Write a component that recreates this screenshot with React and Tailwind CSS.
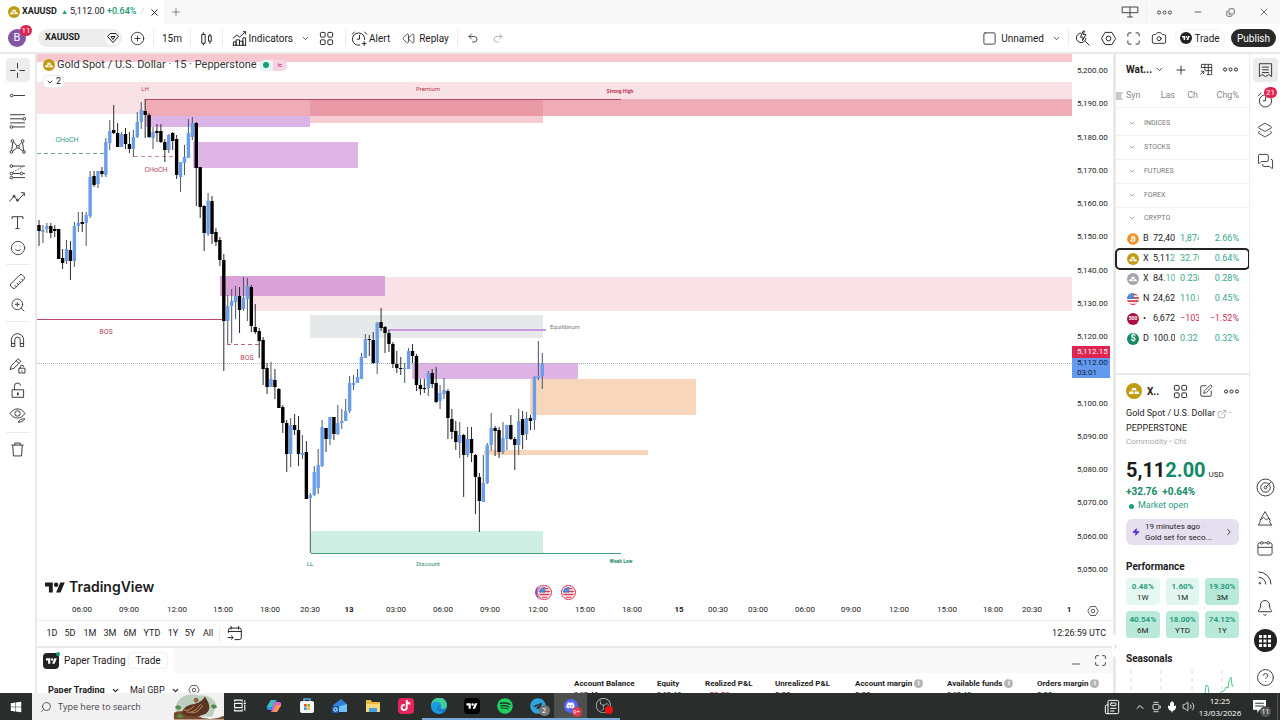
import React from 'react'
import {
  Bell, Camera, ChevronDown, ChevronRight, ChevronUp, CircleHelp, CirclePlus, Copy,
  ExternalLink, Layers2, Maximize, MessagesSquare, Mic, Minus,
  Newspaper, Plus, Redo2, Rewind, Rss, Ruler, Search, Smile, SquarePen, Square, Undo2,
  Volume2, X, Zap, ZoomIn,
} from 'lucide-react'
import { FaBitcoin, FaSpotify, FaTelegram, FaTiktok, FaDiscord, FaWindows } from 'react-icons/fa'
import { SiObsstudio } from 'react-icons/si'

// [wick top, body top, body bottom, wick bottom, up?]
const candles = [
  [166, 171, 177, 192, 0], [171, 176, 178, 189, 1], [169, 172, 175, 179, 1], [169, 172, 179, 184, 0],
  [171, 175, 177, 183, 0], [175, 175, 205, 205, 0], [195, 204, 209, 215, 0], [186, 195, 207, 210, 1],
  [187, 196, 207, 226, 0], [168, 172, 207, 213, 1], [158, 169, 172, 178, 1], [158, 168, 170, 178, 0],
  [158, 161, 169, 192, 1], [117, 123, 162, 164, 1], [117, 122, 131, 133, 0], [117, 117, 130, 134, 1],
  [113, 117, 120, 123, 0], [84, 88, 121, 123, 1], [66, 77, 89, 96, 1], [51, 76, 79, 80, 0],
  [69, 79, 93, 93, 0], [78, 80, 93, 93, 1], [74, 80, 90, 95, 0], [78, 90, 95, 99, 0],
  [76, 83, 95, 103, 1], [58, 68, 83, 84, 1], [48, 56, 68, 75, 1], [45, 57, 61, 84, 0],
  [59, 61, 83, 84, 0], [73, 78, 84, 95, 1], [70, 77, 79, 88, 0], [70, 77, 88, 89, 0],
  [85, 88, 96, 108, 0], [80, 81, 96, 99, 1], [78, 79, 87, 96, 0], [81, 85, 121, 125, 0],
  [108, 108, 123, 138, 1], [91, 103, 109, 121, 1], [65, 79, 104, 104, 1], [63, 69, 83, 86, 1],
  [68, 69, 114, 152, 0], [113, 113, 153, 164, 0], [151, 152, 179, 197, 0], [139, 147, 180, 182, 1],
  [142, 147, 180, 190, 0], [174, 178, 188, 192, 0], [183, 186, 206, 212, 0], [200, 206, 267, 317, 0],
  [241, 252, 267, 290, 1], [235, 247, 252, 289, 1], [232, 242, 248, 265, 1], [233, 242, 256, 279, 0],
  [223, 244, 255, 257, 1], [224, 232, 245, 267, 1], [231, 233, 272, 278, 0], [250, 273, 278, 280, 0],
  [274, 277, 287, 304, 0], [283, 286, 315, 331, 0], [309, 314, 333, 340, 0], [308, 325, 333, 333, 1],
  [315, 326, 333, 345, 0], [334, 335, 354, 354, 0], [351, 353, 369, 379, 0], [366, 369, 400, 418, 0],
  [364, 371, 400, 413, 1], [360, 371, 376, 381, 0], [362, 376, 400, 412, 0], [381, 399, 401, 405, 1],
  [387, 398, 445, 445, 0], [439, 441, 444, 499, 1], [412, 418, 441, 442, 1], [395, 411, 434, 440, 1],
  [366, 373, 412, 413, 1], [374, 374, 385, 398, 0], [363, 363, 385, 391, 1], [363, 363, 380, 386, 0],
  [351, 369, 380, 381, 1], [355, 367, 369, 375, 1], [345, 357, 367, 367, 1], [322, 329, 357, 359, 1],
  [321, 329, 331, 336, 1], [315, 323, 329, 329, 1], [299, 303, 325, 325, 1], [280, 285, 304, 304, 1],
  [281, 285, 286, 302, 0], [278, 286, 309, 310, 0], [268, 269, 309, 320, 1], [254, 268, 274, 277, 0],
  [272, 273, 279, 299, 0], [276, 279, 290, 298, 0], [288, 290, 310, 314, 0], [297, 310, 314, 319, 0],
  [303, 314, 315, 321, 0], [309, 314, 315, 329, 1], [294, 297, 315, 315, 1], [290, 297, 302, 309, 0],
  [300, 302, 331, 337, 0], [325, 331, 335, 341, 0], [325, 334, 335, 339, 0], [317, 319, 334, 342, 1],
  [315, 319, 330, 334, 0], [313, 329, 348, 349, 0], [331, 339, 347, 355, 1], [324, 336, 340, 345, 1],
  [335, 337, 364, 385, 0], [355, 365, 378, 385, 0], [367, 377, 388, 396, 0], [368, 381, 389, 404, 1],
  [380, 381, 401, 443, 0], [373, 385, 401, 403, 1], [373, 385, 399, 408, 0], [400, 401, 423, 460, 0],
  [419, 423, 447, 478, 0], [401, 429, 448, 448, 1], [389, 391, 429, 430, 1], [359, 374, 391, 397, 1],
  [372, 374, 377, 402, 0], [373, 376, 398, 404, 0], [368, 384, 398, 400, 1], [371, 371, 385, 396, 1],
  [361, 371, 385, 386, 0], [383, 385, 391, 416, 0], [355, 367, 391, 401, 1], [357, 365, 381, 395, 0],
  [358, 364, 380, 386, 1], [361, 364, 367, 376, 0], [322, 323, 366, 376, 1], [287, 322, 324, 326, 1],
  [299, 310, 322, 335, 1],
]

const prices = ['5,200.00', '5,190.00', '5,180.00', '5,170.00', '5,160.00', '5,150.00', '5,140.00', '5,130.00',
  '5,120.00', '', '5,100.00', '5,090.00', '5,080.00', '5,070.00', '5,060.00', '5,050.00']

const times = [
  [45, '06:00'], [92, '09:00'], [140, '12:00'], [186, '15:00'], [233, '18:00'], [273, '20:30'], [312, '13'],
  [359, '03:00'], [406, '06:00'], [453, '09:00'], [501, '12:00'], [548, '15:00'], [595, '18:00'], [642, '15'],
  [681, '00:30'], [721, '03:00'], [768, '06:00'], [814, '09:00'], [862, '12:00'], [910, '15:00'], [956, '18:00'],
  [995, '20:30'], [1032, '1'],
]

const symbols = [
  { icon: 'btc', name: 'B', last: '72,40', lastEnd: '', chg: '1,874', pct: '2.66%' },
  { icon: 'gold', name: 'X', last: '5,11', lastEnd: '2', chg: '32.76', pct: '0.64%', active: true },
  { icon: 'silver', name: 'X', last: '84.', lastEnd: '10', chg: '0.238', pct: '0.28%' },
  { icon: 'us', name: 'N', last: '24,62', lastEnd: '', chg: '110.8', pct: '0.45%' },
  { icon: 'spx', name: '•', last: '6,672', lastEnd: '', chg: '−103', pct: '−1.52%', down: true },
  { icon: 'dxy', name: 'D', last: '100.0', lastEnd: '', chg: '0.32', pct: '0.32%' },
]

const performance = [
  ['0.48%', '1W', 'bg-[#e6f8f2]'], ['1.60%', '1M', 'bg-[#e0f6ef]'], ['19.30%', '3M', 'bg-[#b9e9da]'],
  ['40.54%', '6M', 'bg-[#b9e9da]'], ['18.00%', 'YTD', 'bg-[#b9e9da]'], ['74.12%', '1Y', 'bg-[#b9e9da]'],
]

const account = [
  ['Account Balance', '947.48', 'w-[83px]'], ['Equity', '947.48', 'w-[48px]'], ['Realized P&L', '−52.52', 'w-[70px]', true],
  ['Unrealized P&L', '0.00', 'w-[80px]'], ['Account margin', '0.00', 'w-[92px]'], ['Available funds', '947.48', 'w-[90px]'],
  ['Orders margin', '0.00', 'w-[76px]'],
]

const Icon = ({ children, className = 'h-[19px] w-[19px]' }) => (
  <svg viewBox="0 0 28 28" className={className} fill="none" stroke="currentColor" strokeWidth="1.4">
    {children}
  </svg>
)

const Dots = () => (
  <Icon>
    <circle cx="6" cy="14" r="2.300" />
    <circle cx="14" cy="14" r="2.300" />
    <circle cx="22" cy="14" r="2.300" />
  </Icon>
)

const Hexagon = ({ className }) => (
  <Icon className={className}>
    <path d="M9 5h10l5.500 9-5.500 9H9l-5.500-9z" strokeLinejoin="round" />
    <circle cx="14" cy="14" r="3.500" />
  </Icon>
)

const Grid4 = () => (
  <Icon>
    <rect x="5" y="5" width="7" height="7" rx="1.500" />
    <rect x="16" y="5" width="7" height="7" rx="1.500" />
    <rect x="5" y="16" width="7" height="7" rx="1.500" />
    <rect x="16" y="16" width="7" height="7" rx="1.500" />
  </Icon>
)

const TvMark = ({ className }) => (
  <svg viewBox="0 0 36 26" className={className} fill="currentColor">
    <path d="M14 22H7V11H0V4h14v18zM28 22h-8l7.500-18h8L28 22z" />
    <circle cx="20" cy="8" r="4" />
  </svg>
)

const Metal = ({ className, color = '#c19b12' }) => (
  <svg viewBox="0 0 18 18" className={className}>
    <circle cx="9" cy="9" r="9" fill={color} />
    <path d="M7 5.500h4l1 3H6zM4 9.500h4l.8 3H3zM10 9.500h4l1 3H9.300z" fill="#fff" />
  </svg>
)

const Flag = ({ className }) => (
  <svg viewBox="0 0 18 18" className={className}>
    <clipPath id="flagClip"><circle cx="9" cy="9" r="9" /></clipPath>
    <g clipPath="url(#flagClip)">
      <rect width="18" height="18" fill="#f5f5f5" />
      <path d="M0 1h18v2.500H0zM0 6h18v2.500H0zM0 11h18v2.500H0zM0 16h18v2H0z" fill="#dd3a4e" />
      <rect width="10" height="9" fill="#3f7fc8" />
      <path d="M2 3h1M5 3h1M8 3h1M3 6h1M6 6h1" stroke="#fff" />
    </g>
  </svg>
)

const SymbolIcon = ({ kind }) => {
  if (kind === 'btc') return <FaBitcoin className="h-3 w-3 text-[#ee9128]" />
  if (kind === 'gold') return <Metal className="h-3 w-3" />
  if (kind === 'silver') return <Metal className="h-3 w-3" color="#a3a5ab" />
  if (kind === 'us') return <Flag className="h-3 w-3" />
  if (kind === 'spx') {
    return <span className="flex h-3 w-3 items-center justify-center rounded-full bg-[#a8123e] text-[5px] font-bold text-white">500</span>
  }
  return <span className="flex h-3 w-3 items-center justify-center rounded-full bg-[#178a63] text-[9px] font-bold text-white">$</span>
}

const Divider = () => <span className="h-4 w-px shrink-0 bg-[#ececec]" />

const TitleBar = () => (
  <header className="flex h-6 shrink-0 items-stretch bg-[#f8f8f8]">
    <div className="flex w-[164px] items-center bg-white pl-2 text-[9px]">
      <Metal className="h-3 w-3" />
      <span className="ml-[2px] w-[37px] font-bold">XAUUSD</span>
      <span className="w-[11px] text-center text-[7px] text-[#129a72]">▲</span>
      <span className="w-[37px]">5,112.00</span>
      <span className="w-[34px] font-medium text-[#129a72]">+0.64%</span>
      <span className="w-2 text-[#cfcfcf]">/</span>
      <button aria-label="Close tab"><X className="h-[11px] w-[11px]" strokeWidth={2} /></button>
    </div>
    <button aria-label="New tab" className="w-6 pl-[6px]"><Plus className="h-3 w-3 text-[#666]" strokeWidth={1.5} /></button>
    <div className="ml-auto flex items-center text-[#444]">
      <button aria-label="Layouts" className="flex w-8 justify-center">
        <Icon className="h-5 w-5"><path d="M3 7h22v8H3zM14 7v14M10 21h8" /></Icon>
      </button>
      <Divider />
      <button aria-label="More" className="flex w-[34px] justify-center"><Dots /></button>
      <button aria-label="Minimise" className="flex w-[33px] justify-center"><Minus className="h-[10px] w-[10px]" /></button>
      <button aria-label="Restore" className="flex w-[33px] justify-center"><Copy className="h-[9px] w-[9px] -scale-y-100" /></button>
      <button aria-label="Close" className="flex w-[33px] justify-center"><X className="h-3 w-3" strokeWidth={1.5} /></button>
    </div>
  </header>
)

const Toolbar = () => (
  <div className="flex h-7 shrink-0 items-center bg-white text-[10px]">
    <div className="relative ml-2 mr-3 h-[18px] w-[18px] rounded-full bg-[#8656a6] text-center text-[11px] leading-[18px] text-white">
      B
      <span className="absolute -right-[6px] -top-1 h-[11px] w-[12px] rounded-full bg-[#e02450] text-center text-[8px] leading-[11px]">11</span>
    </div>
    <button className="flex h-[18px] w-[84px] items-center justify-between rounded-full bg-[#ececec] pl-[7px] pr-[2px] text-[9px] font-bold">
      XAUUSD
      <span className="flex h-[15px] w-[15px] items-center justify-center rounded-full bg-[#f8f8f8]">
        <Icon className="h-[14px] w-[14px]">
          <path d="M8 5h12l5 6-11 12L3 11zM10 11h8l-4 6z" strokeWidth="2" />
        </Icon>
      </span>
    </button>
    <button aria-label="Compare" className="flex w-[31px] justify-center"><CirclePlus className="h-[15px] w-[15px]" strokeWidth={1.3} /></button>
    <Divider />
    <button className="w-9">15m</button>
    <Divider />
    <button aria-label="Candles" className="flex w-[31px] justify-center">
      <Icon><path d="M7 8h5v13H7zM9.500 5v3M9.500 21v3M17 10h4v8h-4zM19 7v3M19 18v4" /></Icon>
    </button>
    <Divider />
    <button className="flex w-[70px] items-center justify-end">
      <Icon><path d="M5 24v-5h4v5M9 24v-8h5v8M14 24v-6h5v6M19 24V13h4v11M4 24h20M4 14l6-5 4 3 9-8M19 4h4v4" /></Icon>
      Indicators
    </button>
    <button aria-label="Favourites" className="flex w-6 justify-center"><ChevronDown className="h-[9px] w-[9px]" /></button>
    <button aria-label="Templates" className="flex w-7 justify-start"><Grid4 /></button>
    <Divider />
    <button className="ml-1 flex items-center">
      <Icon>
        <path d="M21.500 16A9 9 0 1 0 15 23.500M14 9v6h-4M3 8l4-4M21 4l4 4M21 18v7M17.500 21.500h7" />
      </Icon>
      Alert
    </button>
    <button className="ml-3 flex items-center gap-1"><Rewind className="h-[13px] w-[13px]" strokeWidth={1.4} />Replay</button>
    <span className="w-2" />
    <Divider />
    <button aria-label="Undo" className="flex w-[30px] justify-center"><Undo2 className="h-3 w-3" strokeWidth={1.5} /></button>
    <button aria-label="Redo" className="flex w-5 justify-center text-[#999]"><Redo2 className="h-3 w-3" strokeWidth={1.5} /></button>

    <div className="ml-auto flex items-center">
      <button className="flex items-center gap-1"><Square className="h-[15px] w-[15px]" strokeWidth={1.3} />Unnamed</button>
      <button aria-label="Layout menu" className="flex w-6 justify-center"><ChevronDown className="h-[9px] w-[9px]" /></button>
      <Divider />
      <button aria-label="Quick search" className="flex w-[26px] justify-center">
        <Icon><path d="M12 6a7 7 0 1 0 7 7M18 18l6 6M15 3l-4 9h4l-1 5 5-9h-4l2-5z" /></Icon>
      </button>
      <button aria-label="Settings" className="flex w-[26px] justify-center"><Hexagon /></button>
      <button aria-label="Fullscreen" className="flex w-[25px] justify-center"><Maximize className="h-[15px] w-[15px]" strokeWidth={1.4} /></button>
      <button aria-label="Snapshot" className="flex w-[25px] justify-center"><Camera className="h-4 w-4" strokeWidth={1.3} /></button>
      <button className="ml-1 flex h-[18px] w-[50px] items-center justify-center gap-[2px] rounded-full border border-[#f2f2f2]">
        <span className="flex h-3 w-3 items-center justify-center rounded-full bg-[#222] text-white"><TvMark className="h-[6px] w-2" /></span>
        Trade
      </button>
      <button className="ml-[6px] mr-1 h-[18px] w-[45px] rounded-full bg-[#2a2a2a] text-white">Publish</button>
    </div>
  </div>
)

const ToolButton = ({ label, active, children }) => (
  <button
    aria-label={label}
    className={active ? 'flex h-6 w-6 items-center justify-center rounded bg-[#ededed]' : 'flex h-6 w-6 items-center justify-center'}
  >
    {children}
  </button>
)

const DrawingTools = () => (
  <nav className="flex w-[35px] shrink-0 flex-col items-center bg-white pt-1 text-[#333]">
    <div className="flex h-[202px] flex-col justify-between">
      <ToolButton label="Cross" active><Icon><path d="M14 3v8M14 17v8M3 14h8M17 14h8" /></Icon></ToolButton>
      <ToolButton label="Horizontal ray"><Icon><circle cx="5.500" cy="14" r="2" /><path d="M8 14h17" /></Icon></ToolButton>
      <ToolButton label="Fib retracement">
        <Icon>
          <path d="M3 5.500h22M3 11.500h19M3 17.500h22M7 23.500h18" />
          <circle cx="24" cy="11.500" r="2" /><circle cx="5" cy="23.500" r="2" />
        </Icon>
      </ToolButton>
      <ToolButton label="Patterns">
        <Icon>
          <path d="M5.500 20 7 8M8 7l5 6M16 13l4-5M21.500 8 23 20M7 21l6-5M16 16l6 5" />
          <circle cx="6.500" cy="6" r="2" /><circle cx="21.500" cy="6" r="2" /><circle cx="14.500" cy="14.500" r="2" />
          <circle cx="5" cy="22" r="2" /><circle cx="23.500" cy="22" r="2" />
        </Icon>
      </ToolButton>
      <ToolButton label="Projection">
        <Icon>
          <circle cx="5" cy="6" r="2" /><circle cx="5" cy="17" r="2" /><circle cx="5" cy="23" r="2" /><circle cx="20" cy="17" r="2" />
          <path d="M7 6h18M7 17h11M22 17h3M7 23h18" /><path d="m7 15 15-8" strokeDasharray="2 2" />
        </Icon>
      </ToolButton>
      <ToolButton label="Brush"><Icon><path d="m2 20 7-8 5 7 10-11M19 7h5v5" /><circle cx="9" cy="12" r="1.500" /><circle cx="14" cy="18" r="1.500" /></Icon></ToolButton>
      <ToolButton label="Text"><Icon><path d="M6 9V5.500h16V9M14 5.500V23M11 23h6" /></Icon></ToolButton>
      <ToolButton label="Emoji"><Smile className="h-4 w-4" strokeWidth={1.3} /></ToolButton>
    </div>
    <hr className="my-1 w-6 border-[#ececec]" />
    <ToolButton label="Measure"><Ruler className="h-[17px] w-[17px] rotate-90" strokeWidth={1.3} /></ToolButton>
    <ToolButton label="Zoom in"><ZoomIn className="h-4 w-4" strokeWidth={1.3} /></ToolButton>
    <hr className="mb-[6px] mt-1 w-6 border-[#ececec]" />
    <div className="flex h-[100px] flex-col justify-between">
      <ToolButton label="Magnet">
        <Icon><path d="M5 23V13a9 9 0 0 1 18 0v10h-5V13a4 4 0 0 0-8 0v10zM5 18.500h5M18 18.500h5" /></Icon>
      </ToolButton>
      <ToolButton label="Stay in drawing mode">
        <Icon><path d="m3 20 2-6L15 4l4 4L9 18zM12 7l4 4M16 18h9v7h-9zM18 18v-2a2.500 2.500 0 0 1 5 0M20.500 21v2" /></Icon>
      </ToolButton>
      <ToolButton label="Lock drawings">
        <Icon><path d="M6 13h17v11H6zM9.500 13V8a4.500 4.500 0 0 1 9-1" strokeLinejoin="round" /><path d="M14.500 17v4" strokeWidth="2.500" /></Icon>
      </ToolButton>
      <ToolButton label="Hide drawings">
        <Icon><path d="M3 11c6-9 16-9 22 0-6 9-16 9-22 0zM15 24c2-4 4-5 10-5-3 3-5 5-10 5z" /><circle cx="14" cy="11" r="4" /></Icon>
      </ToolButton>
    </div>
    <hr className="my-1 w-6 border-[#ececec]" />
    <ToolButton label="Remove">
      <Icon><path d="M5 7.500h18M10 7.500V4.500h8v3M7 7.500l1 16h12l1-16" strokeLinejoin="round" /></Icon>
    </ToolButton>
  </nav>
)

const Chart = () => (
  <svg className="h-full w-full">
    {/* supply and demand zones */}
    <rect y="0" width="100%" height="8" fill="#f8c8d1" />
    <rect y="28" width="100%" height="32" fill="#f8e2e6" />
    <rect x="108" y="45" width="100%" height="17" fill="#efabb6" />
    <rect x="273" y="45" width="233" height="17" fill="#e99aa6" />
    <rect x="273" y="62" width="233" height="7" fill="#f6ccd2" />
    <rect x="108" y="62" width="165" height="11" fill="#dcb3e6" />
    <rect x="156" y="88" width="165" height="26" fill="#dfb5e6" />
    <rect x="213" y="223" width="100%" height="34" fill="#f8e2e6" />
    <rect x="183" y="222" width="165" height="20" fill="#daa2d8" />
    <rect x="273" y="261" width="233" height="23" fill="#e6e9e9" />
    <rect x="375" y="309" width="166" height="16" fill="#deb4e6" />
    <rect x="493" y="325" width="166" height="36" fill="#f8d6bc" />
    <rect x="447" y="396" width="164" height="5" fill="#f8d6bc" />
    <rect x="274" y="477" width="232" height="23" fill="#cfeee4" />

    {/* structure lines */}
    <rect x="108" y="45" width="476" height="1" fill="#b04a64" />
    <rect x="274" y="499" width="310" height="1" fill="#3f9c86" />
    <rect x="351" y="275" width="158" height="2" fill="#c898dc" />
    <rect x="0" y="265" width="185" height="1" fill="#c04468" />
    <path d="M0 99.500H68" stroke="#6da797" strokeDasharray="4 3" />
    <path d="M97 102.500H137" stroke="#c08a96" strokeDasharray="4 3" />
    <path d="M190 290.500H222" stroke="#b3667a" strokeDasharray="4 3" />
    <line x1="0" x2="100%" y1="309.500" y2="309.500" stroke="#a9b2b2" strokeDasharray="1 1" />

    {candles.map(([high, top, bottom, low, up], i) => {
      const x = 2 + i * 3.932
      return (
        <g key={i}>
          <rect x={x - 0.5} y={high} width="1" height={low - high} fill={up ? '#4c5566' : '#2c2c2c'} />
          <rect x={x - 1.7} y={top} width="3.400" height={Math.max(bottom - top, 1)} fill={up ? '#6b9ee8' : '#000'} />
        </g>
      )
    })}

    <g className="text-[6px]" fill="#bd3655" textAnchor="middle">
      <text x="108" y="37">LH</text>
      <text x="391" y="37">Premium</text>
      <text x="583" y="39" className="text-[5px] font-bold">Strong High</text>
    </g>
    <g className="text-[7px]" fill="#b0485f" textAnchor="middle">
      <text x="119" y="118">CHoCH</text>
      <text x="69" y="280">BOS</text>
      <text x="210" y="306">BOS</text>
    </g>
    <text x="30" y="88" className="text-[7px]" fill="#2b9b80" textAnchor="middle">CHoCH</text>
    <text x="513" y="275" className="text-[6px]" fill="#777">Equilibrium</text>
    <g className="text-[6px]" fill="#1b8a6b" textAnchor="middle">
      <text x="273" y="512">LL</text>
      <text x="391" y="512">Discount</text>
      <text x="584" y="509" className="text-[5px] font-bold">Weak Low</text>
    </g>
  </svg>
)

const EventFlag = ({ stacked }) => (
  <span className={stacked ? 'rounded-full border-l-2 border-[#8b4fc0]' : 'rounded-full'}>
    <span className="flex h-[15px] w-[15px] items-center justify-center rounded-full border border-[#e02450] bg-white">
      <Flag className="h-[11px] w-[11px]" />
    </span>
  </span>
)

const ChartPane = () => (
  <section className="flex min-h-0 flex-1 flex-col bg-white">
    <div className="flex min-h-0 flex-1">
      <div className="relative min-w-0 flex-1">
        <Chart />
        {/* legend */}
        <div className="absolute left-[6px] top-1 flex h-[14px] items-center gap-[2px]">
          <Metal className="h-3 w-3" />
          <h1 className="whitespace-nowrap text-[11px] text-[#333]">Gold Spot / U.S. Dollar · 15 · Pepperstone</h1>
          <span className="flex h-[11px] items-center rounded-full bg-[#e6f3ef] pl-1">
            <span className="h-[6px] w-[6px] rounded-full bg-[#12a07a]" />
            <span className="ml-1 w-[14px] rounded-r-full bg-[#f8d3e6] text-center text-[9px] leading-[11px] text-[#c02a78]">≈</span>
          </span>
        </div>
        <button className="absolute left-[6px] top-[21px] flex h-[13px] w-[21px] items-center justify-center gap-[2px] rounded-sm border border-[#ececec] bg-white text-[9px]">
          <ChevronDown className="h-2 w-2" strokeWidth={2.5} />2
        </button>
        <div className="absolute bottom-[6px] left-2 flex items-center gap-1">
          <TvMark className="h-[15px] w-5" />
          <span className="font-[Inter] text-[14px] font-semibold leading-4">TradingView</span>
        </div>
        <div className="absolute bottom-px left-[498px] flex gap-[9px]">
          <EventFlag stacked />
          <EventFlag />
        </div>
      </div>
      {/* price scale */}
      <div className="relative flex w-[41px] shrink-0 flex-col justify-between pb-[26px] pt-3 text-[8px] leading-[10px]">
        {prices.map((p, i) => <span key={i} className="h-[10px] pl-[5px]">{p}</span>)}
        <div className="absolute left-0 top-[292px] w-[38px] text-white">
          <div className="h-[12px] bg-[#e02450] pl-[5px] leading-[12px]">5,112.15</div>
          <div className="h-5 bg-[#6399ee] pl-[5px] text-[#10233f]"><div>5,112.00</div><div>03:01</div></div>
        </div>
      </div>
    </div>
    <div className="flex h-[19px] shrink-0 items-center">
      <svg className="h-full flex-1 text-[8px]" fill="#222" textAnchor="middle">
        {times.map(([x, t]) => (
          <text key={x} x={x} y="11" className={t.length < 3 ? 'font-bold' : ''}>{t}</text>
        ))}
      </svg>
      <button aria-label="Axis settings" className="flex w-[41px] shrink-0 justify-center"><Hexagon className="h-[14px] w-[14px]" /></button>
    </div>
    <div className="flex h-[26px] shrink-0 items-center border-t border-[#ececec] pl-[6px] text-[9px]">
      <button className="w-[18px]">1D</button>
      <button className="w-[18px]">5D</button>
      <button className="w-[22px]">1M</button>
      <button className="w-[18px]">3M</button>
      <button className="w-[22px]">6M</button>
      <button className="w-[22px]">YTD</button>
      <button className="w-5">1Y</button>
      <button className="w-[14px]">5Y</button>
      <button className="w-[22px]">All</button>
      <Divider />
      <button aria-label="Go to date" className="flex w-6 justify-end">
        <Icon><path d="M5 13V9q0-3 3-3h13q3 0 3 3v11q0 3-3 3h-7M5 11h19M9 3v5M20 3v5M4 20h8M9 17l3 3-3 3" /></Icon>
      </button>
      <span className="ml-auto pr-[7px]">12:26:59 UTC</span>
    </div>
  </section>
)

const AccountPanel = () => (
  <section className="h-[45px] shrink-0 overflow-hidden bg-white">
    <div className="flex h-[25px] items-center bg-[#f8f8f8]">
      <div className="flex h-full w-[137px] items-center bg-white pl-[6px] text-[10px]">
        <span className="relative flex h-4 w-4 items-center justify-center rounded bg-[#222] text-white">
          <TvMark className="h-2 w-[11px]" />
          <span className="absolute -right-px -top-px h-1 w-1 rounded-full bg-[#12a07a]" />
        </span>
        <span className="ml-[5px] w-16 whitespace-nowrap">Paper Trading</span>
        <button className="h-[17px] w-10 rounded border border-[#f0f0f0]">Trade</button>
      </div>
      <button aria-label="Minimise panel" className="ml-auto mt-[6px]"><Minus className="h-3 w-3" strokeWidth={1.5} /></button>
      <button aria-label="Maximise panel" className="ml-3 mr-[6px]"><Maximize className="h-[13px] w-[13px]" strokeWidth={1.5} /></button>
    </div>
    <div className="flex items-start pl-[11px]">
      <div className="flex items-center pt-[10px] text-[9px] leading-3">
        <button className="flex w-[82px] items-center gap-[6px] whitespace-nowrap font-bold">Paper Trading <ChevronDown className="h-[9px] w-[9px]" strokeWidth={3} /></button>
        <button className="flex w-[57px] items-center gap-[6px] whitespace-nowrap">Mal GBP <ChevronDown className="h-[9px] w-[9px]" strokeWidth={3} /></button>
        <Hexagon className="h-[14px] w-[14px]" />
      </div>
      <dl className="ml-auto flex pt-[5px] text-[8px] leading-[11px]">
        {account.map(([label, value, width, down], i) => (
          <div key={label} className={width}>
            <dt className="flex items-center gap-[2px] whitespace-nowrap font-bold">
              {label}
              {i > 3 && <span className="h-[9px] w-[9px] rounded-full bg-[#b5b5b5] text-center text-[7px] leading-[9px] text-white">i</span>}
            </dt>
            <dd className={down ? 'text-[#d02a4c]' : ''}>{value}</dd>
          </div>
        ))}
      </dl>
    </div>
  </section>
)

const Watchlist = () => (
  <section className="h-[319px] shrink-0 bg-white">
    <div className="flex h-[31px] items-center pl-[10px] text-[10px]">
      <button className="flex w-[38px] items-center justify-between whitespace-nowrap font-bold">Wat... <ChevronDown className="h-[9px] w-[9px]" /></button>
      <button aria-label="Add symbol" className="flex w-[34px] justify-center"><Plus className="h-[14px] w-[14px]" strokeWidth={1.5} /></button>
      <button aria-label="Advanced view" className="flex w-4 justify-center">
        <Icon><path d="M6 12V5h18v18h-9M6 10.500h18M12 5v10M18 5v18M12 16h12M4 23l6-6M5 17h5v5" /></Icon>
      </button>
      <button aria-label="More" className="flex w-8 justify-center"><Dots /></button>
    </div>
    <table className="w-full table-fixed border-collapse text-[9px]">
      <colgroup>
        <col className="w-[27px]" />
        <col className="w-[8px]" />
        <col className="w-[25px]" />
        <col className="w-[23px]" />
        <col />
      </colgroup>
      <thead>
        <tr className="h-[22px] border-b border-[#f0f0f0] text-[#888]">
          <th colSpan={2} className="p-0 text-left font-normal">
            <span className="flex items-center gap-[3px]">
              <svg viewBox="0 0 7 8" className="h-2 w-[7px]" fill="#c8c8c8"><path d="M0 0h7L5 4l2 4H0z" /></svg>
              Syn
            </span>
          </th>
          <th className="py-0 pl-0 pr-px text-right font-normal">Las</th>
          <th className="py-0 pl-0 pr-px text-right font-normal">Ch</th>
          <th className="py-0 pl-0 pr-[10px] text-right font-normal">Chg%</th>
        </tr>
      </thead>
      <tbody>
        <tr className="h-1" />
        {['INDICES', 'STOCKS', 'FUTURES', 'FOREX'].map((name) => (
          <tr key={name} className="h-6 border-b border-[#f3f3f3]">
            <td colSpan={5} className="p-0">
              <button className="flex items-center gap-2 pl-3 text-[7px] text-[#777]"><ChevronDown className="h-2 w-2" />{name}</button>
            </td>
          </tr>
        ))}
        <tr className="h-[22px]">
          <td colSpan={5} className="p-0">
            <button className="flex items-center gap-2 pl-3 text-[7px] text-[#777]"><ChevronDown className="h-2 w-2" />CRYPTO</button>
          </td>
        </tr>
        {symbols.map((s) => (
          <tr key={s.icon} className={s.active ? 'h-5 rounded outline-2 -outline-offset-1 outline-[#222]' : 'h-5'}>
            <td className="py-0 pl-[11px] pr-0"><SymbolIcon kind={s.icon} /></td>
            <td className="p-0">{s.name}</td>
            <td className="py-0 pl-[2px] pr-0">
              <div className="w-[22px] overflow-hidden">{s.last}<span className="text-[#4eb39a]">{s.lastEnd}</span></div>
            </td>
            <td className={s.down ? 'p-0 text-[#c8305a]' : 'p-0 text-[#36a98c]'}>
              <div className="ml-1 w-[19px] overflow-hidden">{s.chg}</div>
            </td>
            <td className={s.down ? 'py-0 pl-0 pr-[10px] text-right text-[#c8305a]' : 'py-0 pl-0 pr-[10px] text-right text-[#36a98c]'}>{s.pct}</td>
          </tr>
        ))}
      </tbody>
    </table>
  </section>
)

const SymbolDetails = () => (
  <section className="min-h-0 flex-1 overflow-hidden bg-white pl-[10px] pr-[10px]">
    <div className="flex h-8 items-center text-[10px]">
      <Metal className="h-4 w-4" />
      <span className="ml-[5px] w-6 font-bold">X..</span>
      <button aria-label="Widgets" className="w-[26px]"><Grid4 /></button>
      <button aria-label="Note" className="w-[25px] pl-[2px]"><SquarePen className="h-[14px] w-[14px]" strokeWidth={1.4} /></button>
      <button aria-label="More" className="-mr-2"><Dots /></button>
    </div>
    <p className="flex h-[14px] items-center gap-[2px] whitespace-nowrap text-[9px]">Gold Spot / U.S. Dollar <ExternalLink className="h-[10px] w-[10px] text-[#888]" strokeWidth={1.5} /> ·</p>
    <p className="text-[9px] leading-[14px]">PEPPERSTONE</p>
    <p className="text-[8px] leading-[14px] text-[#aaa]">Commodity • Cfd</p>
    <p className="mt-[9px] flex h-6 items-baseline text-[20px] font-bold leading-6">
      5,11<span className="text-[#128a68]">2.00</span>
      <span className="ml-[3px] text-[8px] font-normal">USD</span>
    </p>
    <p className="mt-[3px] text-[10px] font-bold leading-[14px] text-[#128a68]">+32.76&nbsp; +0.64%</p>
    <p className="flex h-[14px] items-center gap-1 pl-[3px] text-[9px] text-[#2b9b80]"><span className="h-[5px] w-[5px] rounded-full bg-[#12a07a]" />Market open</p>
    <a href="#news" className="mt-[6px] flex h-[26px] items-center rounded-md bg-[#e5dff0] pl-[6px] pr-[5px] text-[8px] leading-[11px]">
      <Zap className="h-2 w-2 text-[#5a33c8]" fill="currentColor" />
      <span className="ml-[5px] flex-1 whitespace-nowrap">19 minutes ago <span className="text-[#999]">·</span><br />Gold set for seco...</span>
      <ChevronRight className="h-[10px] w-[10px]" />
    </a>
    <h2 className="mt-[15px] text-[10px] font-bold leading-[14px]">Performance</h2>
    <div className="mt-1 grid grid-cols-3 gap-[6px]">
      {performance.map(([pct, label, bg]) => (
        <div key={label} className={`${bg} h-[27px] rounded-sm pt-[3px] text-center text-[8px] leading-[11px]`}>
          <div className="font-bold text-[#2a9d7c]">{pct}</div>
          <div>{label}</div>
        </div>
      ))}
    </div>
    <h2 className="mt-[14px] text-[10px] font-bold leading-[14px]">Seasonals</h2>
    <svg className="mt-1 h-10 w-full" fill="none">
      <path d="M5 0v40M35 0v40M66 0v40M96 0v40" stroke="#d8d8d8" strokeDasharray="4 4" />
      <path d="m76 30 3-6 1-9 2 1 1 8 5 2 3-2 2 2 2-4 3-1 2-4 2 1 1-7 2-4 1 8 1 2" stroke="#4ccb8a" />
    </svg>
  </section>
)

const SideRail = () => (
  <nav className="flex w-[31px] shrink-0 flex-col items-center border-l border-[#ececec] bg-white text-[#333]">
    <button aria-label="Watchlist" className="mt-1 flex h-6 w-[25px] items-center justify-center rounded bg-[#ebebeb]">
      <Icon><path d="M5 4h18v19l-4-3-5 3-5-3-4 3zM9 9h10M9 13h10M9 17h10" /></Icon>
    </button>
    <button aria-label="Alerts" className="relative mt-[5px] flex h-6 w-6 items-center justify-center">
      <Icon><circle cx="14" cy="16" r="9" /><path d="M14 10v6h-4M3 9l5-5M20 4l5 5" /></Icon>
      <span className="absolute right-0 top-0 h-[11px] w-[13px] rounded-full bg-[#e02450] text-center text-[8px] leading-[11px] text-white">21</span>
    </button>
    <button aria-label="Layers" className="mt-[7px] flex h-6 items-center"><Layers2 className="h-4 w-4" strokeWidth={1.3} /></button>
    <button aria-label="Chats" className="mt-[7px] flex h-6 items-center"><MessagesSquare className="h-[17px] w-[17px]" strokeWidth={1.3} /></button>
    <div className="mt-auto flex flex-col items-center gap-3 pb-[6px]">
      <button aria-label="Screener">
        <Icon><circle cx="14" cy="14" r="12.500" /><circle cx="14" cy="14" r="7" /><circle cx="14" cy="14" r="2" /><path d="m15 13 7-7" /></Icon>
      </button>
      <button aria-label="Pine">
        <Icon className="h-[18px] w-[18px]"><path d="m4 25 3-6M24 25l-3-6M3 25h22M14 4 6 18l6-5 4 4 4-3 2 4z" strokeLinejoin="round" /></Icon>
      </button>
      <button aria-label="Calendar">
        <Icon className="h-[18px] w-[18px]"><rect x="3" y="6" width="22" height="19" rx="3" /><path d="M3 13h22" /><circle cx="9" cy="6" r="2" fill="#fff" /><circle cx="19" cy="6" r="2" fill="#fff" /></Icon>
      </button>
      <button aria-label="News"><Rss className="h-[18px] w-[18px]" strokeWidth={1.3} /></button>
      <button aria-label="Notifications"><Bell className="h-[18px] w-[18px]" strokeWidth={1.3} /></button>
      <button aria-label="Products" className="flex h-[23px] w-[23px] items-center justify-center rounded-full bg-[#222] text-white">
        <svg viewBox="0 0 14 14" className="h-3 w-3" fill="currentColor">
          <path d="M0 0h3.500v3.500H0zM5.200 0h3.500v3.500H5.200zM10.500 0H14v3.500h-3.500zM0 5.200h3.500v3.500H0zM5.200 5.200h3.500v3.500H5.200zM10.500 5.200H14v3.500h-3.500zM0 10.500h3.500V14H0zM5.200 10.500h3.500V14H5.200zM10.500 10.500H14V14h-3.500z" />
        </svg>
      </button>
      <button aria-label="Help"><CircleHelp className="mt-1 h-[19px] w-[19px]" strokeWidth={1.2} /></button>
    </div>
  </nav>
)

const TaskApp = ({ label, open, active, children }) => (
  <button
    aria-label={label}
    className={`flex w-[33px] items-center justify-center border-b-2 ${open ? 'border-[#76a9d8]' : 'border-transparent'} ${active ? 'bg-[#4d504f]' : ''}`}
  >
    {children}
  </button>
)

const Taskbar = () => (
  <footer className="flex h-[27px] shrink-0 items-stretch bg-[#292d2b] font-['Open_Sans',sans-serif] text-white">
    <button aria-label="Start" className="flex w-8 items-center justify-center"><FaWindows className="h-3 w-3" /></button>
    <label className="flex w-48 items-center overflow-hidden bg-[#f1f1f1] text-[#333]">
      <Search className="ml-2 mr-[6px] h-3 w-3 shrink-0 -scale-x-100" strokeWidth={1.5} />
      <input type="text" aria-label="Search" placeholder="Type here to search" className="w-[116px] bg-transparent text-[9px] placeholder-[#444] outline-none" />
      <svg viewBox="0 0 54 27" className="h-[27px] w-[54px]">
        <path d="M6 8Q14-2 28 2q14-1 18 10l-4 12H8Q0 18 6 8z" fill="#bcd0bd" />
        <path d="M2 20q10-4 24 3t28 0v4H2z" fill="#7a4a2a" />
        <path d="M10 21q2-9 13-10Q32 8 34 3q9 12 1 18-12 6-25 0z" fill="#5b3524" />
        <path d="M15 19q7 3 15-8M20 20q7 1 12-8M12 17q5 2 11-4" stroke="#c98d5b" fill="none" />
        <path d="M3 14q4-4 7 1-4 4-7-1zM40 13q4-4 7 1-4 4-7-1zM5 23q4-4 7 1-4 4-7-1z" fill="#528c4a" />
        <circle cx="25" cy="7" r="2.500" fill="#98643f" />
      </svg>
    </label>
    <TaskApp label="Task view">
      <Icon className="h-[15px] w-[15px]"><path d="M3 7V4h14v3M3 21v3h14v-3M3 10h14v8H3zM22 4v4M22 12v12M20 10h4" strokeWidth="2" /></Icon>
    </TaskApp>
    <TaskApp label="Copilot">
      <svg viewBox="0 0 16 16" className="h-4 w-4">
        <path d="M5 2h6L8 12H3Q0 12 1 8z" fill="#2f8fe8" /><path d="M5 2h4L6 9H1z" fill="#39c3b0" />
        <path d="M11 14H5L8 4h5q3 0 2 4z" fill="#d765c8" /><path d="M11 14H7l3-7h5z" fill="#f2994a" />
      </svg>
    </TaskApp>
    <TaskApp label="Store">
      <svg viewBox="0 0 16 16" className="h-4 w-4">
        <path d="M5 4V1h6v3" fill="none" stroke="#4db0ef" strokeWidth="1.500" /><rect x="1" y="3" width="14" height="12" rx="2" fill="#f5f5f5" />
        <path d="M5 6h2.700v2.700H5z" fill="#e8502f" /><path d="M8.300 6H11v2.700H8.300z" fill="#7ab829" /><path d="M5 9.300h2.700V12H5z" fill="#2f9be8" /><path d="M8.300 9.300H11V12H8.300z" fill="#f5b81f" />
      </svg>
    </TaskApp>
    <TaskApp label="Outlook">
      <svg viewBox="0 0 16 16" className="h-4 w-4">
        <path d="m1 7 8-6 6 5v8H2z" fill="#2f7fd8" /><path d="m5 9 10-3v8H5z" fill="#6fc3f5" /><rect y="8" width="7" height="7" rx="1" fill="#1558b0" />
        <circle cx="3.500" cy="11.500" r="1.700" fill="none" stroke="#fff" />
      </svg>
    </TaskApp>
    <TaskApp label="Explorer">
      <svg viewBox="0 0 16 14" className="h-[14px] w-4">
        <path d="M1 1h5l1 2h8v10H1z" fill="#e9b93f" /><path d="M1 5h14v8H1z" fill="#f8da7a" /><path d="M4 9h8v4H4z" fill="#4a9fe0" />
      </svg>
    </TaskApp>
    <TaskApp label="TikTok"><span className="flex h-4 w-4 items-center justify-center rounded-sm bg-[#e8235a]"><FaTiktok className="h-[11px] w-[11px]" /></span></TaskApp>
    <TaskApp label="Edge" open>
      <svg viewBox="0 0 16 16" className="h-4 w-4">
        <circle cx="8" cy="8" r="8" fill="#1f7fd0" />
        <path d="M0 8a8 8 0 0 1 16-1q0 4-4 4-3 0-2-2 0-4-4-4-4 0-6 3z" fill="#3ccf9a" />
        <path d="M0 8q2-5 7-4 4 1 3 5-1-2-3-1-3 2 0 5 3 2 6 1-4 3-8 1-5-2-5-7z" fill="#1a9be0" />
      </svg>
    </TaskApp>
    <TaskApp label="TradingView" open><span className="flex h-4 w-4 items-center justify-center rounded-sm bg-black"><TvMark className="h-2 w-3" /></span></TaskApp>
    <TaskApp label="Spotify" open><FaSpotify className="h-4 w-4 text-[#1ed15f]" /></TaskApp>
    <TaskApp label="Telegram" open>
      <span className="relative">
        <FaTelegram className="h-4 w-4 text-[#2fa3dc]" />
        <span className="absolute -bottom-[2px] -right-1 h-[11px] w-[11px] rounded-full bg-[#777] text-center text-[7px] leading-[11px]">2</span>
      </span>
    </TaskApp>
    <TaskApp label="Discord" open active>
      <span className="relative">
        <span className="flex h-[14px] w-[14px] items-center justify-center rounded-full bg-[#5865f2]"><FaDiscord className="h-[9px] w-[9px]" /></span>
        <span className="absolute -bottom-1 -right-1 h-[10px] w-[10px] rounded-full bg-[#d83a4e] text-center text-[6px] leading-[10px]">9+</span>
      </span>
    </TaskApp>
    <TaskApp label="OBS" open>
      <span className="relative">
        <SiObsstudio className="h-[15px] w-[15px] text-[#c8c8c8]" />
        <span className="absolute -bottom-px -right-[2px] h-2 w-2 rounded-full bg-[#ee1111]" />
      </span>
    </TaskApp>
    <div className="ml-auto flex items-center">
      <button aria-label="News" className="mr-[14px]"><Newspaper className="h-4 w-4" strokeWidth={1.5} /></button>
      <button aria-label="Hidden icons" className="mr-1"><ChevronUp className="h-3 w-3" /></button>
      <Icon className="mr-1 h-3 w-3"><rect x="7" y="8" width="14" height="12" rx="3" strokeWidth="2" /><path d="M8 3h12M8 25h12M24 11v6" strokeWidth="2" /></Icon>
      <Mic className="mr-1 h-3 w-3" fill="currentColor" />
      <Volume2 className="h-[13px] w-[13px]" strokeWidth={1.5} />
      <div className="w-[50px] text-center text-[8px] leading-[12px]"><div>12:25</div><div>13/03/2026</div></div>
      <button aria-label="Notifications" className="relative ml-2 mr-[11px]">
        <svg viewBox="0 0 12 12" className="h-[13px] w-[13px]"><path d="M0 0h12v9H6l-2 3V9H0z" fill="#fff" /><path d="M2 3h8M2 5.500h8" stroke="#333" /></svg>
        <span className="absolute -bottom-1 -right-[5px] h-[11px] w-[11px] rounded-full bg-[#555] text-center text-[7px] leading-[11px]">11</span>
      </button>
      <span className="mr-[2px] h-[27px] w-px bg-[#555]" />
    </div>
  </footer>
)

export default function App() {
  return (
    <div className="flex h-screen flex-col overflow-hidden bg-[#e9e9e9] font-[Roboto,sans-serif] text-[#1c1c1c]">
      <TitleBar />
      <Toolbar />
      <main className="flex min-h-0 flex-1 pt-[2px]">
        <DrawingTools />
        <div className="relative mx-[2px] flex min-w-0 flex-1 flex-col gap-[2px]">
          <ChartPane />
          <AccountPanel />
          <button aria-label="Collapse sidebar" className="absolute -right-[7px] bottom-9 z-10 flex h-[22px] w-2 items-center rounded-full bg-white text-[#999]">
            <ChevronRight className="h-[7px] w-[7px]" />
          </button>
        </div>
        <aside className="ml-px flex w-[133px] shrink-0 flex-col gap-[2px]">
          <Watchlist />
          <SymbolDetails />
        </aside>
        <SideRail />
      </main>
      <Taskbar />
    </div>
  )
}
